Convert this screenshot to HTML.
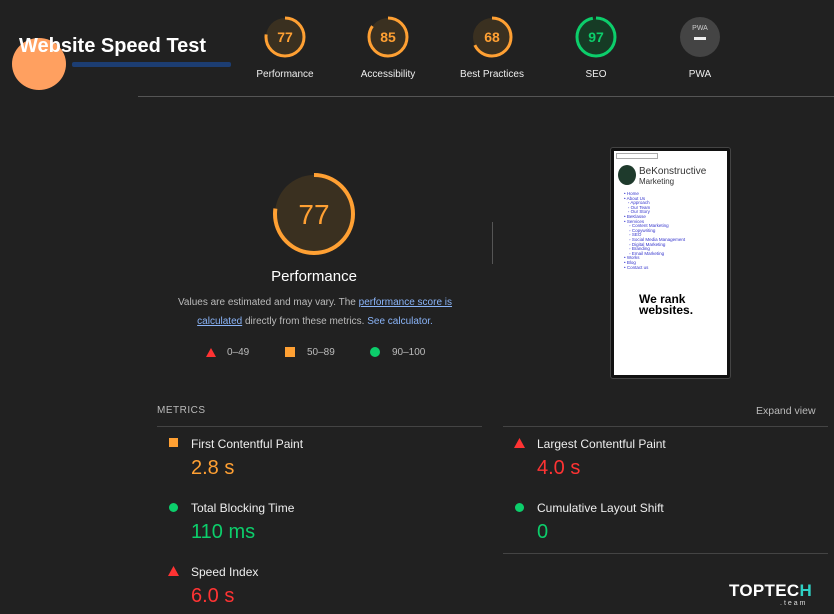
<!DOCTYPE html>
<html><head><meta charset="utf-8"><style>
*{margin:0;padding:0;box-sizing:border-box}
body{width:834px;height:614px;background:#212121;font-family:"Liberation Sans",Arial,sans-serif;color:#fff;position:relative;overflow:hidden}
.a{position:absolute}
.lbl{position:absolute;font-size:10px;color:#eee;text-align:center;width:100px}
.ml{font-size:12px;color:#eee;position:absolute}
.mv{font-size:20px;position:absolute}
.o{color:#ffa033}.r{color:#ff3333}.gr{color:#0cce6b}
a{color:#8ab4f8}
</style></head><body>
<div class="a" style="left:12px;top:38px;width:54px;height:52px;border-radius:50%;background:#ffa060"></div>
<div class="a" style="left:72px;top:62px;width:159px;height:5px;background:#1c3d72;border-radius:2px"></div>
<div class="a" style="left:19px;top:35px;font-size:20px;font-weight:bold;color:#fff;white-space:nowrap">Website Speed Test</div>

<svg class="a" style="left:0;top:0" width="834" height="100">
<g fill="none" stroke-width="3">
<circle cx="285" cy="37" r="19" fill="#3a3020" stroke="none"/>
<circle cx="285" cy="37" r="19" stroke="#ffa033" stroke-dasharray="92 120" transform="rotate(-90 285 37)"/>
<circle cx="388" cy="37" r="19" fill="#3a3020" stroke="none"/>
<circle cx="388" cy="37" r="19" stroke="#ffa033" stroke-dasharray="101 120" transform="rotate(-90 388 37)"/>
<circle cx="492" cy="37" r="19" fill="#3a3020" stroke="none"/>
<circle cx="492" cy="37" r="19" stroke="#ffa033" stroke-dasharray="81 120" transform="rotate(-90 492 37)"/>
<circle cx="596" cy="37" r="19" fill="#163b25" stroke="none"/>
<circle cx="596" cy="37" r="19" stroke="#0cce6b" stroke-dasharray="116 120" transform="rotate(-90 596 37)"/>
<circle cx="700" cy="37" r="20" fill="#444" stroke="none"/>
</g>
<g font-size="14" text-anchor="middle" font-family="Liberation Sans,sans-serif" font-weight="bold">
<text x="285" y="42" fill="#ffa033">77</text>
<text x="388" y="42" fill="#ffa033">85</text>
<text x="492" y="42" fill="#ffa033">68</text>
<text x="596" y="42" fill="#0cce6b">97</text>
<text x="700" y="30" fill="#ccc" font-size="7" font-weight="normal">PWA</text>
</g>
<rect x="694" y="37" width="12" height="3" fill="#eee"/>
<line x1="138" y1="96.5" x2="834" y2="96.5" stroke="#555"/>
</svg>
<div class="lbl" style="left:235px;top:69px">Performance</div>
<div class="lbl" style="left:338px;top:69px">Accessibility</div>
<div class="lbl" style="left:442px;top:69px">Best Practices</div>
<div class="lbl" style="left:546px;top:69px">SEO</div>
<div class="lbl" style="left:650px;top:69px">PWA</div>

<svg class="a" style="left:270px;top:170px" width="90" height="90">
<circle cx="44" cy="44" r="39" fill="#3a3020"/>
<circle cx="44" cy="44" r="39" fill="none" stroke="#ffa033" stroke-width="4" stroke-dasharray="189 246" transform="rotate(-90 44 44)"/>
<text x="44" y="54" text-anchor="middle" font-size="28" fill="#ffa033" font-family="Liberation Sans,sans-serif">77</text>
</svg>
<div class="a" style="left:214px;top:268px;width:200px;text-align:center;font-size:15px">Performance</div>
<div class="a" style="left:165px;top:293px;width:300px;text-align:center;font-size:10px;line-height:19px;color:#bbb">Values are estimated and may vary. The <a style="text-decoration:underline">performance score is calculated</a> directly from these metrics. <a>See calculator.</a></div>
<svg class="a" style="left:205px;top:347px" width="12" height="11"><polygon points="6,1 11,10 1,10" fill="#ff3333"/></svg>
<div class="a" style="left:227px;top:347px;font-size:10px;color:#bbb">0–49</div>
<div class="a" style="left:285px;top:347px;width:10px;height:10px;background:#ffa033"></div>
<div class="a" style="left:307px;top:347px;font-size:10px;color:#bbb">50–89</div>
<div class="a" style="left:370px;top:347px;width:10px;height:10px;border-radius:50%;background:#0cce6b"></div>
<div class="a" style="left:392px;top:347px;font-size:10px;color:#bbb">90–100</div>

<div class="a" style="left:492px;top:222px;width:1px;height:42px;background:#555"></div>
<div class="a" style="left:610px;top:147px;width:121px;height:232px;background:#111;border:1px solid #444;border-radius:3px"></div>
<div class="a" style="left:614px;top:151px;width:113px;height:224px;background:#fff;overflow:hidden;color:#222;font-size:4.5px;line-height:4.6px">
<div style="margin:2px 2px 0;border:1px solid #aaa;width:42px;height:6px"></div>
<div style="position:absolute;left:4px;top:14px;width:18px;height:20px;border-radius:50%;background:#1e3a2c"></div>
<div style="position:absolute;left:25px;top:19px;font-size:10px;color:#333">BeKonstructive</div>
<div style="position:absolute;left:25px;top:29px;font-size:8px;color:#333">Marketing</div>
<div style="position:absolute;left:10px;top:41px;color:#33c">• Home<br>• About Us<br>&nbsp;&nbsp;&nbsp;◦ Approach<br>&nbsp;&nbsp;&nbsp;◦ Our Team<br>&nbsp;&nbsp;&nbsp;◦ Our Story<br>• BeKlasse<br>• Services<br>&nbsp;&nbsp;&nbsp;&nbsp;◦ Content Marketing<br>&nbsp;&nbsp;&nbsp;&nbsp;◦ Copywriting<br>&nbsp;&nbsp;&nbsp;&nbsp;◦ SEO<br>&nbsp;&nbsp;&nbsp;&nbsp;◦ Social Media Management<br>&nbsp;&nbsp;&nbsp;&nbsp;◦ Digital Marketing<br>&nbsp;&nbsp;&nbsp;&nbsp;◦ Branding<br>&nbsp;&nbsp;&nbsp;&nbsp;◦ Email Marketing<br>• Works<br>• Blog<br>• Contact us</div>
<div style="position:absolute;left:25px;top:143px;font-size:12px;line-height:11px;font-weight:bold;color:#000">We rank<br>websites.</div>
</div>

<div class="a" style="left:157px;top:405px;font-size:10px;color:#bbb;letter-spacing:.5px">METRICS</div>
<div class="a" style="left:756px;top:405px;font-size:10.5px;color:#bbb">Expand view</div>
<div class="a" style="left:157px;top:426px;width:325px;height:1px;background:#444"></div>
<div class="a" style="left:503px;top:426px;width:325px;height:1px;background:#444"></div>
<div class="a" style="left:503px;top:553px;width:325px;height:1px;background:#444"></div>

<div class="a" style="left:169px;top:438px;width:9px;height:9px;background:#ffa033"></div>
<div class="ml" style="left:191px;top:437px">First Contentful Paint</div>
<div class="mv o" style="left:191px;top:457px">2.8 s</div>
<div class="a" style="left:169px;top:503px;width:9px;height:9px;border-radius:50%;background:#0cce6b"></div>
<div class="ml" style="left:191px;top:501px">Total Blocking Time</div>
<div class="mv gr" style="left:191px;top:521px">110 ms</div>
<svg class="a" style="left:168px;top:566px" width="11" height="10"><polygon points="5.5,0 11,10 0,10" fill="#ff3333"/></svg>
<div class="ml" style="left:191px;top:565px">Speed Index</div>
<div class="mv r" style="left:191px;top:585px">6.0 s</div>

<svg class="a" style="left:514px;top:438px" width="11" height="10"><polygon points="5.5,0 11,10 0,10" fill="#ff3333"/></svg>
<div class="ml" style="left:537px;top:437px">Largest Contentful Paint</div>
<div class="mv r" style="left:537px;top:457px">4.0 s</div>
<div class="a" style="left:515px;top:503px;width:9px;height:9px;border-radius:50%;background:#0cce6b"></div>
<div class="ml" style="left:537px;top:501px">Cumulative Layout Shift</div>
<div class="mv gr" style="left:537px;top:521px">0</div>

<div class="a" style="left:729px;top:581px;font-size:17px;font-weight:bold;color:#fff;letter-spacing:.3px">TOPTEC<span style="color:#2fd1c5">H</span></div>
<div class="a" style="left:780px;top:600px;font-size:7px;color:#ddd;letter-spacing:2px">.team</div>
</body></html>
